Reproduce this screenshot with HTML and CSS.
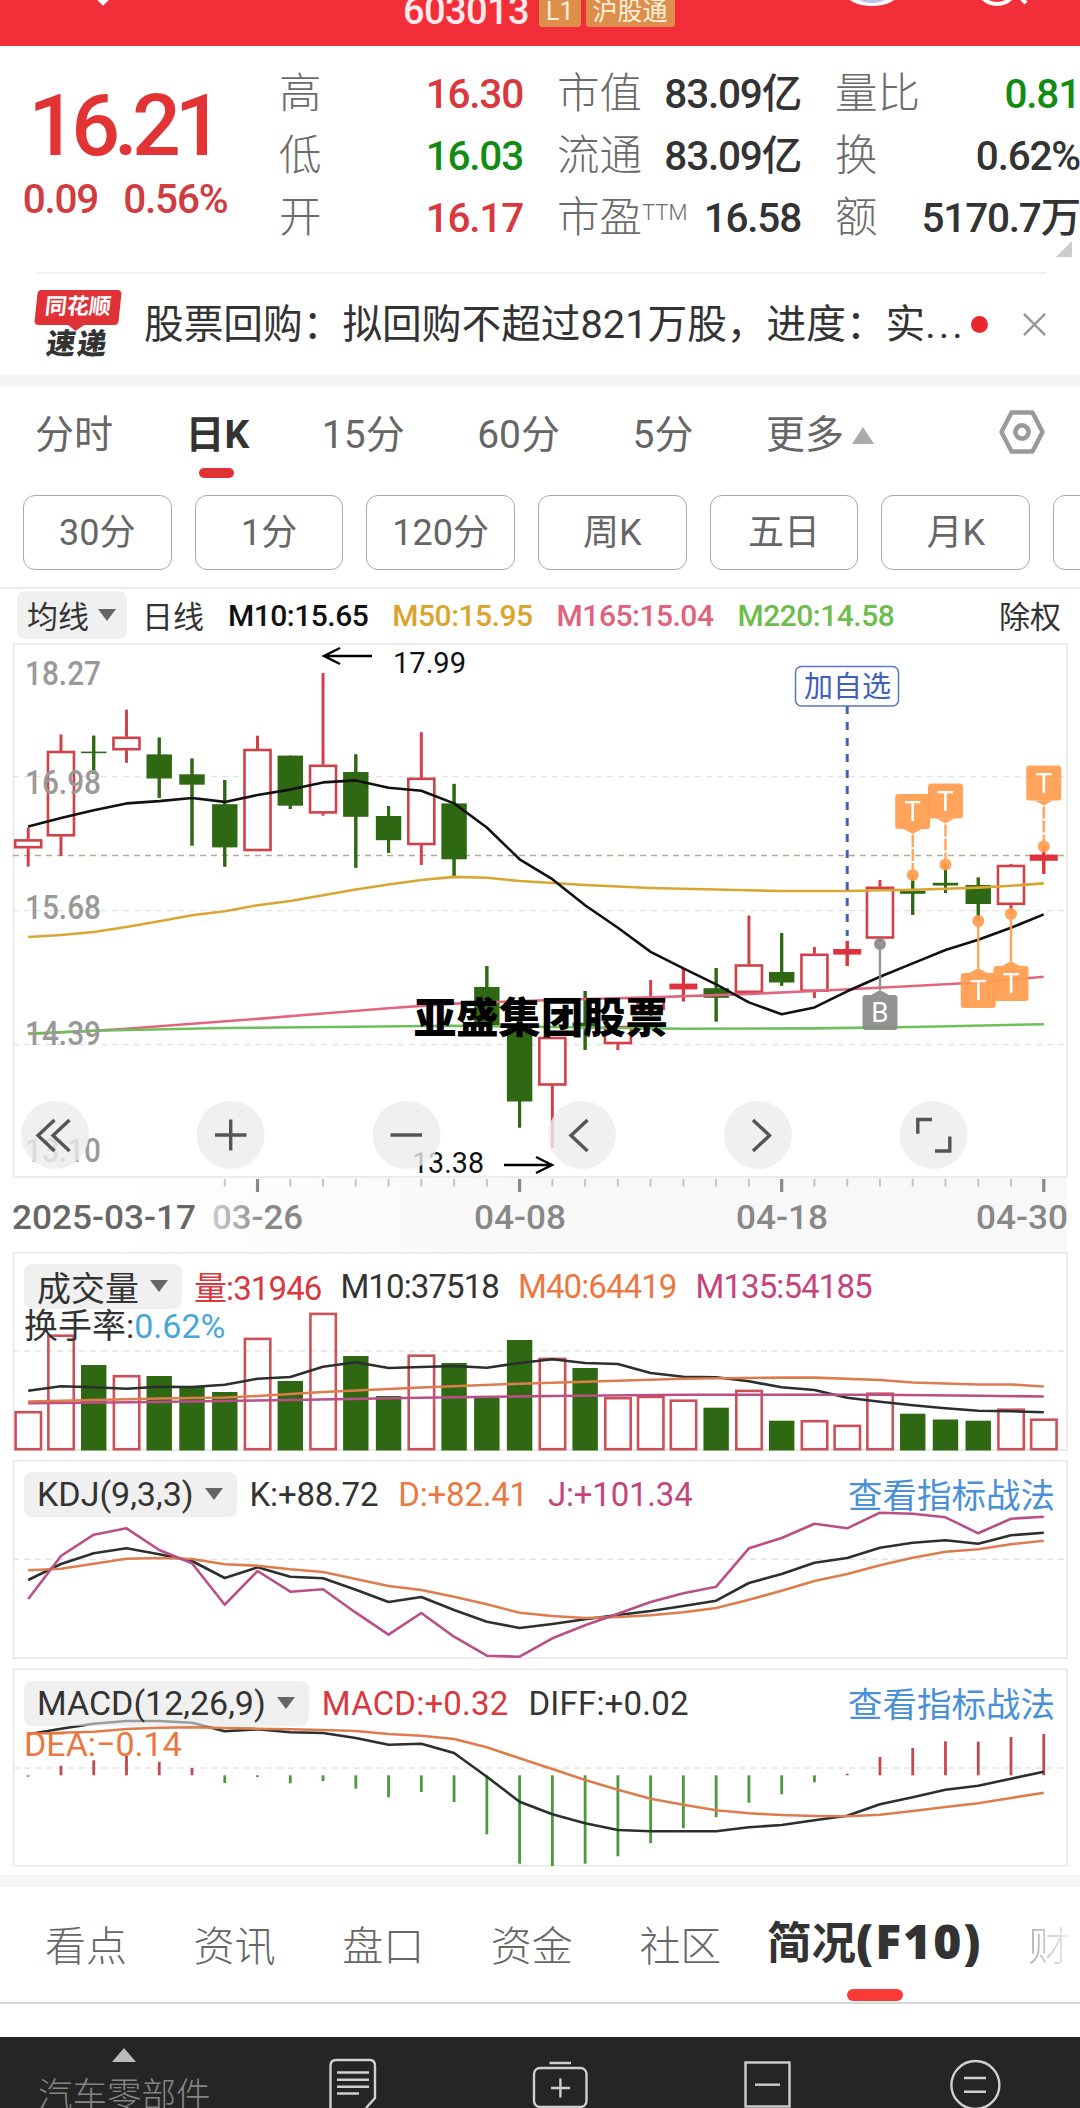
FILE: index.html
```html
<!DOCTYPE html>
<html lang="zh-CN">
<head>
    <meta charset="UTF-8">
    <title>603013</title>
    <link rel="stylesheet" href="styles.css">
</head>
<body>
    <header class="topbar">
        <svg class="topbar-icons" viewBox="0 0 1080 45">
            <path d="M92 -8 L103 3 L114 -8" fill="none" stroke="#fff" stroke-width="4"/>
            <ellipse cx="872" cy="-8" rx="27" ry="14" fill="#fff"/>
            <ellipse cx="872" cy="-8" rx="19" ry="11" fill="#b9c6e6"/>
            <circle cx="997" cy="-16" r="20" fill="none" stroke="#fff" stroke-width="4"/>
            <path d="M1011 -12 L1026 3" stroke="#fff" stroke-width="4"/>
        </svg>
        <span class="code">603013</span>
        <span class="badge">L1</span>
        <span class="badge">沪股通</span>
    </header>

    <section class="quote">
        <div class="price">
            <div class="price-now">16.21</div>
            <div class="price-diff"><span>0.09</span><span>0.56%</span></div>
        </div>
        <div class="stats">
            <span class="label">高</span><span class="value red">16.30</span>
            <span class="label">市值</span><span class="value">83.09亿</span>
            <span class="label">量比</span><span class="value green">0.81</span>
            <span class="label">低</span><span class="value green">16.03</span>
            <span class="label">流通</span><span class="value">83.09亿</span>
            <span class="label">换</span><span class="value">0.62%</span>
            <span class="label">开</span><span class="value red">16.17</span>
            <span class="label">市盈<sup>TTM</sup></span><span class="value">16.58</span>
            <span class="label">额</span><span class="value">5170.7万</span>
        </div>
        <i class="corner"></i>
    </section>

    <section class="news">
        <div class="news-logo">
            <div class="news-logo-top">同花顺</div>
            <div class="news-logo-bottom">速递</div>
        </div>
        <div class="news-text">股票回购：拟回购不超过821万股，进度：实<span class="dots">...</span></div>
        <i class="news-dot"></i>
        <svg class="news-close" viewBox="0 0 24 24"><path d="M1 1 L23 23 M23 1 L1 23" stroke="#999" stroke-width="2.6"/></svg>
    </section>

    <nav class="periods">
        <span>分时</span>
        <span class="active">日K</span>
        <span>15分</span>
        <span>60分</span>
        <span>5分</span>
        <span>更多<i class="up"></i></span>
        <svg class="gear" viewBox="0 0 46 44">
            <path d="M12.5 2.5 H33.5 L43.5 22 L33.5 41.5 H12.5 L2.5 22 Z" fill="none" stroke="#999" stroke-width="4.4" stroke-linejoin="round"/>
            <circle cx="23" cy="22" r="6.6" fill="none" stroke="#999" stroke-width="4.6"/>
        </svg>
    </nav>

    <div class="chips">
        <span>30分</span><span>1分</span><span>120分</span><span>周K</span><span>五日</span><span>月K</span><span></span>
    </div>

    <div class="ma-row">
        <span class="select">均线<i class="down"></i></span>
        <span class="ma-title">日线</span>
        <span class="black">M10:15.65</span>
        <span class="yellow">M50:15.95</span>
        <span class="pink">M165:15.04</span>
        <span class="lime">M220:14.58</span>
        <span class="ma-right">除权</span>
    </div>

    <div class="kline">
        <svg id="kline" viewBox="0 0 1080 612"></svg>
        <div class="watermark">亚盛集团股票</div>
    </div>

    <section class="panel volume">
        <svg id="volume" viewBox="0 0 1080 208"></svg>
        <div class="panel-head">
            <span class="select">成交量<i class="down"></i></span>
            <span class="red">量:31946</span>
            <span>M10:37518</span>
            <span class="orange">M40:64419</span>
            <span class="magenta">M135:54185</span>
        </div>
        <div class="panel-sub">换手率:<span class="blue">0.62%</span></div>
    </section>

    <section class="panel kdj">
        <svg id="kdj" viewBox="0 0 1080 208"></svg>
        <div class="panel-head">
            <span class="select">KDJ(9,3,3)<i class="down"></i></span>
            <span>K:+88.72</span>
            <span class="orange">D:+82.41</span>
            <span class="magenta">J:+101.34</span>
            <span class="link">查看指标战法</span>
        </div>
    </section>

    <section class="panel macd">
        <svg id="macd" viewBox="0 0 1080 207"></svg>
        <div class="panel-head">
            <span class="select">MACD(12,26,9)<i class="down"></i></span>
            <span class="red">MACD:+0.32</span>
            <span>DIFF:+0.02</span>
            <span class="link">查看指标战法</span>
        </div>
        <div class="panel-sub orange">DEA:−0.14</div>
    </section>

    <nav class="tabs">
        <span>看点</span>
        <span>资讯</span>
        <span>盘口</span>
        <span>资金</span>
        <span>社区</span>
        <span class="active">简况<b>(F10)</b></span>
        <span class="faded">财</span>
    </nav>

    <footer class="bottombar">
        <div class="sector"><i class="up"></i>汽车零部件</div>
        <svg class="bottombar-icons" viewBox="220 2037 860 71" fill="none" stroke="#d0d0d0" stroke-width="2.4">
            <path d="M336 2060 H370 Q375 2060 375 2066 V2098 L366 2108 M330.500 2110 V2066 Q330.500 2060 336 2060"/>
            <path d="M337 2072.500 H369 M337 2079.700 H369 M337 2086.700 H369 M337 2093.500 H359"/>
            <rect x="534" y="2068" width="52.500" height="39" rx="6"/>
            <path d="M549.500 2063 H571 M551 2088 H570 M560.400 2078.500 V2097.500"/>
            <rect x="745.500" y="2062.500" width="44" height="44"/>
            <path d="M755 2084.700 H780"/>
            <circle cx="975.400" cy="2085" r="24"/>
            <path d="M964 2078 H986 M964 2091.700 H986"/>
        </svg>
    </footer>

    <script>
        const COUNT = 32;
        const RED = '#d2404a';
        const GREEN = '#2f6813';
        const cx = i => 28.2 + i * 32.76;

        function line(x1, y1, x2, y2, color, width, dash) {
            return `<line x1="${x1}" y1="${y1}" x2="${x2}" y2="${y2}" stroke="${color}" stroke-width="${width}"${dash ? ` stroke-dasharray="${dash}"` : ''}/>`;
        }

        function rect(x, y, w, h, fill, stroke) {
            return `<rect x="${x}" y="${y}" width="${w}" height="${h}" fill="${fill}"${stroke ? ` stroke="${stroke}" stroke-width="2.6"` : ''}/>`;
        }

        function text(value, x, y, size, width, color, weight = 400) {
            return `<text x="${x}" y="${y}" font-size="${size}" font-weight="${weight}" fill="${color}" textLength="${width}" lengthAdjust="spacingAndGlyphs">${value}</text>`;
        }

        // values: one y for each candle, or [index, y] pairs
        function curve(values, color, width = 2.6) {
            const points = values.map((v, i) => Array.isArray(v) ? `${cx(v[0])},${v[1]}` : `${cx(i)},${v}`);
            return `<polyline points="${points.join(' ')}" fill="none" stroke="${color}" stroke-width="${width}" stroke-linejoin="round"/>`;
        }

        function frame(top, bottom) {
            return `<rect x="13.500" y="${top}" width="1053.500" height="${bottom - top}" fill="#fff" stroke="#e8e8e8" stroke-width="1.6"/>`;
        }

        // K line: type (r hollow, R solid red, g green), high, body top, body bottom, low
        const candles = [
            ['r', 187.5, 199.4, 208.2, 226.6], ['r', 94.5, 111, 196.3, 216], ['g', 95.7, 111.6, 113.2, 134],
            ['r', 69.7, 96.8, 110.2, 122.8], ['g', 97.6, 114.4, 138.5, 157.7], ['g', 118.6, 134.3, 144.7, 205.5],
            ['g', 140, 164.2, 207.4, 226.6], ['r', 95.7, 109, 211, 211], ['g', 115.6, 115.6, 165.7, 169],
            ['r', 33, 124.8, 173.4, 175.7], ['g', 114.4, 132, 176.8, 227.7], ['g', 166, 176, 200.2, 212.8],
            ['r', 92.2, 137.8, 205, 225], ['g', 143.9, 163.4, 219.3, 236], ['g', 326, 347, 385, 387],
            ['g', 388, 388, 461.5, 487.5], ['r', 397, 397, 445.5, 508], ['g', 351, 382.7, 386.5, 409.8],
            ['r', 386, 386, 404, 410], ['r', 340, 358, 370, 376], ['R', 328, 343.6, 349.4, 361.3],
            ['g', 328, 348.2, 357.8, 381.5], ['r', 275.5, 324.5, 352.8, 352.8], ['g', 293, 332, 342.5, 345.6],
            ['r', 307, 313.8, 351.7, 358], ['R', 301, 309, 314.6, 326], ['r', 240, 246.8, 298.5, 302],
            ['g', 236, 251, 253.8, 274.8], ['g', 224.6, 242.8, 245.5, 253], ['g', 237.6, 245, 264, 281],
            ['r', 223.9, 225, 264.8, 273.6], ['R', 206.6, 214.6, 220.8, 233.8]
        ];

        function marker(i, letter, top, dotY, color, below) {
            const x = cx(i);
            const tip = below ? top - 5 : top + 40;
            const edge = below ? top : top + 35;
            let s = line(x, dotY, x, tip, color, 2.4, below ? '' : '12 2');
            s += `<circle cx="${x}" cy="${dotY}" r="6" fill="${color}"/>`;
            s += `<rect x="${x - 17.5}" y="${top}" width="35" height="35" rx="3" fill="${color}"/>`;
            s += `<path d="M${x - 9} ${edge} L${x} ${tip} L${x + 9} ${edge} Z" fill="${color}"/>`;
            s += `<text x="${x}" y="${top + 27}" font-size="28" fill="#fff" text-anchor="middle">${letter}</text>`;
            return `<g opacity="0.92">${s}</g>`;
        }

        function drawKline() {
            let s = rect(0, 537, 1067, 75, 'url(#axis)') + frame(4, 537);
            s = `<defs>
                <linearGradient id="axis"><stop offset="0.1" stop-color="#fff"/><stop offset="0.5" stop-color="#f8f8f8"/></linearGradient>
                <linearGradient id="fade"><stop offset="0" stop-color="#ccc"/><stop offset="0.6" stop-color="#888"/></linearGradient>
            </defs>` + s;
            [136.6, 270.6, 404.5].forEach(y => { s += line(13, y, 1067, y, '#e3e3e3', 1.4, '6 5'); });
            s += line(13, 215.5, 1067, 215.5, '#b5ab8b', 1.6, '6 5');

            candles.forEach(([type, high, top, bottom, low], i) => {
                const x = cx(i);
                const color = type === 'g' ? GREEN : type === 'R' ? '#e0323a' : RED;
                s += line(x, high, x, top, color, 3) + line(x, bottom, x, low, color, 3);
                if (type === 'r') {
                    s += rect(x - 13, top + 1, 26, Math.max(bottom - top - 2, 2), '#fff', color);
                } else {
                    s += rect(x - (type === 'R' ? 14 : 12.7), top, type === 'R' ? 28 : 25.4, bottom - top, color);
                    s += line(x, high, x, low, color, 3);
                }
            });

            s += curve([297, 295, 292, 287, 281.3, 275.2, 271.3, 265.2, 261, 255.3, 249.5, 244.5, 240, 236.9, 237.7, 241, 243, 245, 246.5, 248, 248.8, 249.5, 250.3, 251, 251, 251, 250.3, 249.9, 248.8, 247.6, 245.7, 243.4], '#d8a732');
            s += curve([[0, 394], [2, 390.7], [3, 388.8], [5, 383.8], [7, 378.9], [9, 373.5], [11, 368.2], [13, 363.6], [16, 360], [19, 357.4], [22, 354], [24, 351], [27, 346], [29, 342.5], [31, 336.8]], '#e0667f');
            s += curve([[0, 393.5], [2, 390.7], [6, 388], [13, 385.7], [16, 387], [20, 388.8], [24, 388.4], [27, 387], [31, 384.2]], '#6cc05a');
            s += curve([186.4, 178, 170.3, 163.4, 161.1, 158, 161.9, 155, 149.6, 142.4, 140.4, 147.7, 150.8, 163.4, 187.5, 219.3, 239.2, 265.2, 287.8, 311.9, 328.4, 344.4, 362.4, 374.3, 367.4, 351.3, 336.8, 323.4, 310, 299.7, 287.8, 274.4], '#111');

            [['18.27', 45.2], ['16.98', 153.8], ['15.68', 278.6], ['14.39', 405], ['13.10', 522]].forEach(([label, y]) => {
                s += text(label, 25, y, 33, 76, '#999', 500);
            });

            // highest and lowest price
            s += `<path d="M372 16 H324 M340 8 L324 16 L340 24" fill="none" stroke="#000" stroke-width="2.4"/>`;
            s += text('17.99', 393, 33, 30, 73, '#111');
            s += `<path d="M504 525 H552 M536 517 L552 525 L536 533" fill="none" stroke="#000" stroke-width="2.4"/>`;
            s += text('13.38', 412, 533, 30, 72, '#111');

            // favourite mark and trade marks
            s += line(847.2, 66, 847.2, 296, '#3f62b8', 3, '8 8');
            s += `<rect x="795.500" y="26.500" width="103" height="39.500" rx="6" fill="#fff" stroke="#5b77c4" stroke-width="1.5"/>`;
            s += text('加自选', 804, 57, 29, 87, '#4060bb');
            s += marker(27, 'T', 154, 235, '#ff9d4d') + marker(28, 'T', 143.5, 224.6, '#ff9d4d') + marker(31, 'T', 125.5, 206.6, '#ff9d4d');
            s += marker(29, 'T', 333, 281, '#ff9d4d', true) + marker(30, 'T', 326, 274, '#ff9d4d', true);
            s += marker(26, 'B', 355, 304, '#8a8a8a', true);

            // round buttons
            [55, 230.7, 406.7, 582, 758, 933.6].forEach(x => {
                s += `<circle cx="${x}" cy="495" r="34" fill="#ececec" fill-opacity="0.8"/>`;
            });
            s += `<path d="M54.500 480 L38 495.500 L54.500 511 M69.500 480 L53 495.500 L69.500 511
                M215 495 H246.500 M230.700 479.500 V510.500 M390.500 495 H422
                M587.500 480 L571 495.500 L587.500 511 M753 480 L769.500 495.500 L753 511
                M917.800 493.700 V479.500 H932 M935 511 H949.800 V496.500" fill="none" stroke="#555" stroke-width="3.400"/>`;

            for (let i = 6; i < COUNT; i++) {
                const major = i % 8 === 7;
                s += line(cx(i), 539, cx(i), major ? 552 : 546.5, major ? '#888' : '#c4c4c4', major ? 3.2 : 2);
            }
            s += text('2025-03-17', 12, 589, 33, 184, '#666', 500);
            s += text('03-26', 212, 589, 33, 91, 'url(#fade)', 500);
            s += text('04-08', 474, 589, 33, 92, '#888', 500);
            s += text('04-18', 736, 589, 33, 92, '#888', 500);
            s += text('04-30', 976, 589, 33, 92, '#888', 500);
            document.getElementById('kline').innerHTML = s;
        }

        function drawVolume() {
            const tops = [159, 82.5, 113, 123, 124, 134, 140, 85.7, 129, 60.7, 104, 144, 102.5, 111, 146, 88, 105.7, 116, 145, 143.7, 147.5, 155.7, 137.7, 168.7, 168, 172.7, 140.5, 161.7, 167.5, 168.7, 156.5, 166.5];
            let s = frame(0.8, 198) + line(13, 99, 1067, 99, '#e3e3e3', 1.4, '6 5');
            tops.forEach((top, i) => {
                if (candles[i][0] === 'g') {
                    s += rect(cx(i) - 12.7, top, 25.4, 198.5 - top, GREEN);
                } else {
                    s += rect(cx(i) - 12.6, top + 1.2, 25.4, 196 - top, 'none', '#cc5058');
                }
            });
            s += curve([138.7, 134.3, 135.3, 136.7, 134.7, 135, 132.7, 126.7, 125, 114.7, 110.3, 116, 115, 114, 115.7, 111, 107.3, 111, 112, 121, 124.7, 125.3, 129.3, 135.3, 138, 145.7, 149.7, 153.3, 156.3, 158.7, 159.3, 160.3], '#2b2f2e');
            s += curve([[0, 151.3], [4, 150], [8, 148], [12, 145.7], [16, 144], [20, 142.7], [26, 142.7], [29, 143.7], [31, 144.5]], '#b94f86');
            s += curve([[0, 149.5], [4, 146.5], [6, 145.5], [7, 144], [9, 140], [12, 135.5], [15, 131.7], [18, 128.7], [20, 126.8], [23, 125.6], [24, 125.6], [26, 128], [27, 130.5], [29, 132.5], [30, 132.5], [31, 134.5]], '#dd7c4c');
            document.getElementById('volume').innerHTML = s;
        }

        function drawKdj() {
            let s = frame(0.8, 198) + line(13, 99.3, 1067, 99.3, '#e3e3e3', 1.4, '6 5');
            s += curve([120, 104, 93.3, 88.3, 94.3, 101, 118, 107.3, 116.7, 118.3, 129.7, 142, 137, 150, 161.7, 168, 164, 159.3, 155, 151, 146, 140.7, 123, 114, 102.7, 98, 87.7, 82.7, 80.3, 83.7, 75.3, 72.7], '#2b2f2e');
            s += curve([110.3, 108.7, 103.7, 98.7, 98, 99, 104.3, 105.7, 109.3, 112, 119, 126, 130, 136.7, 144.3, 152.7, 156, 158, 157, 155.3, 152.3, 148, 139.7, 130.7, 121, 114, 105.3, 97.8, 91.7, 89.3, 84.3, 80.7], '#dd7c4c');
            s += curve([139, 96, 74.7, 68.3, 90, 103.3, 144.7, 111, 131.7, 129.3, 152.7, 174.7, 153, 176.7, 195.7, 196.7, 178.3, 165.3, 153.7, 142, 133.3, 126.7, 88.3, 78, 63.7, 68.3, 52.7, 53.7, 57.3, 73.3, 58.7, 56.7], '#b94f86');
            document.getElementById('kdj').innerHTML = s;
        }

        function drawMacd() {
            const ends = [108.7, 97.7, 92.3, 88, 94, 100, 115, 109, 115.3, 113, 120.7, 129.3, 124, 134, 166.3, 195.7, 198, 195.7, 188.3, 175, 160.3, 149.3, 134.7, 126.3, 114.3, 105.7, 89, 80, 73.3, 73.7, 69, 66];
            let s = frame(1.3, 197.7) + line(13, 100, 1067, 100, '#e3e3e3', 1.4, '6 5');
            ends.forEach((y, i) => {
                s += line(cx(i), 107.3, cx(i), y, y > 107.3 ? '#4a9a3d' : '#c4484f', 2.8);
            });
            s += curve([66.3, 60.7, 55.7, 53, 53, 54.7, 63.3, 61.3, 64.3, 65, 70, 76.7, 75.7, 85, 108.7, 133.7, 146.3, 155.3, 162, 163.3, 163.3, 163.3, 159.3, 157, 152.3, 147.7, 136.3, 129.3, 121.7, 117.7, 110.7, 103.7], '#2b2f2e');
            s += curve([66, 64.7, 63.7, 61, 59.7, 59.3, 60, 60.7, 61.3, 62, 63, 66, 67.7, 71, 79.3, 90.3, 101, 112, 121.7, 130.7, 136.7, 142.3, 145.3, 147, 148, 148.3, 146.7, 143, 139, 135.3, 130, 124.7], '#dd7c4c');
            document.getElementById('macd').innerHTML = s;
        }

        drawKline();
        drawVolume();
        drawKdj();
        drawMacd();
    </script>
</body>
</html>
```

FILE: styles.css
```css
* {
    box-sizing: border-box;
}

body {
    margin: 0;
    width: 1080px;
    height: 2108px;
    overflow: hidden;
    background-color: #fff;
    color: #333;
    font-family: Roboto, "Noto Sans CJK SC", sans-serif;
    white-space: nowrap;
}

svg {
    display: block;
}

i {
    display: inline-block;
    flex-shrink: 0;
}

.red { color: #d8383e; }
.green { color: #128c12; }
.black { color: #111; }
.yellow { color: #dba42c; }
.pink { color: #e0627b; }
.lime { color: #6cbd4c; }
.orange { color: #ea7840; }
.magenta { color: #c4457c; }
.blue { color: #48a6d8; }

.up {
    border: 11px solid transparent;
    border-top: none;
    border-bottom: 17px solid #aaa;
}

.down {
    border: 9px solid transparent;
    border-bottom: none;
    border-top: 12px solid #666;
}

/* top bar */
.topbar {
    position: relative;
    display: flex;
    align-items: flex-start;
    height: 46px;
    padding-left: 403px;
    background-color: #f22e39;
}

.topbar-icons {
    position: absolute;
    left: 0;
    top: 0;
    width: 1080px;
    height: 45px;
}

.code {
    height: 40px;
    margin: -9px 10px 0 0;
    color: #ffe9ea;
    font-size: 38px;
    font-weight: 500;
    line-height: 40px;
    letter-spacing: -0.6px;
}

.badge {
    height: 35px;
    margin: -8px 5px 0 0;
    padding: 0 7px;
    border-radius: 3px;
    background-color: #dd8e4a;
    color: #fff1dc;
    font-size: 25px;
    line-height: 40px;
}

/* quote */
.quote {
    position: relative;
    display: flex;
    height: 226px;
}

.price {
    width: 246px;
    padding-top: 35px;
    text-align: center;
    color: #e23434;
}

.price-now {
    height: 90px;
    font-size: 86px;
    font-weight: 500;
    line-height: 90px;
    letter-spacing: -6px;
}

.price-diff {
    display: flex;
    justify-content: center;
    gap: 25px;
    height: 50px;
    margin-top: 3px;
    padding-left: 4px;
    color: #d03c40;
    font-size: 40.5px;
    font-weight: 500;
    line-height: 50px;
    letter-spacing: -1.2px;
}

.stats {
    display: grid;
    grid-template-columns: 80px 164px 119px 159px 109px 170px;
    grid-template-rows: repeat(3, 62px);
    padding: 17px 0 0 33px;
    line-height: 62px;
}

.label {
    color: #6b6b6b;
    font-size: 42.5px;
    font-weight: 300;
}

.label:nth-child(6n + 3), .label:nth-child(6n + 5) {
    margin-left: 34px;
}

.label sup {
    display: inline-block;
    font-size: 22px;
    line-height: 20px;
    vertical-align: 12px;
}

.value {
    font-size: 40.5px;
    font-weight: 500;
    text-align: right;
    letter-spacing: -1.2px;
}

.corner {
    position: absolute;
    right: 8px;
    bottom: 15px;
    border: 8px solid #ccc;
    border-top-color: transparent;
    border-left-color: transparent;
}

/* news */
.news {
    display: flex;
    align-items: center;
    height: 103px;
    margin-left: 36px;
    border-top: 2px solid #f1f1f1;
    width: 1010px;
}

.news-logo {
    width: 84px;
    margin: 0 24px 0 0;
    text-align: center;
}

.news-logo-top {
    position: relative;
    height: 35px;
    border-radius: 4px;
    background-color: #e03236;
    color: #fff;
    font-size: 22px;
    font-weight: 700;
    line-height: 34px;
    transform: skewX(-6deg);
}

.news-logo-top::after {
    content: "";
    position: absolute;
    left: 34px;
    top: 35px;
    border: 8px solid transparent;
    border-top: 6px solid #e03236;
    border-bottom: none;
}

.news-logo-bottom {
    height: 34px;
    font-size: 29px;
    font-weight: 900;
    line-height: 38px;
    letter-spacing: 2px;
    transform: skewX(-8deg);
}

.news-text {
    width: 824px;
    font-size: 39.7px;
    line-height: 50px;
}

.dots {
    letter-spacing: 3px;
}

.news-dot {
    width: 17px;
    height: 17px;
    margin-left: 3px;
    border-radius: 50%;
    background-color: #e8282c;
}

.news-close {
    width: 23px;
    height: 23px;
    margin-left: auto;
}

/* periods */
.periods {
    display: flex;
    align-items: center;
    gap: 72.5px;
    height: 108px;
    padding: 0 35px 8px 35px;
    border-top: 12px solid #f5f5f5;
    color: #666;
    font-size: 39px;
}

.periods .up {
    margin-left: 8px;
    vertical-align: 4px;
}

.periods .active {
    position: relative;
    color: #333;
    font-weight: 700;
}

.active::after {
    content: "";
    position: absolute;
    left: 50%;
    bottom: -19px;
    width: 35px;
    height: 10px;
    margin-left: -18px;
    border-radius: 5px;
    background-color: #e03232;
}

.gear {
    width: 46px;
    height: 44px;
    margin: 2px 0 0 auto;
}

/* chips */
.chips {
    display: flex;
    gap: 23px;
    height: 106px;
    padding: 12px 0 0 23px;
    border-bottom: 2px solid #ececec;
    overflow: hidden;
}

.chips span {
    flex: 0 0 148.7px;
    height: 75px;
    border: 1.5px solid #aaa;
    border-radius: 12px;
    color: #666;
    font-size: 36px;
    line-height: 74px;
    text-align: center;
}

/* averages */
.ma-row {
    display: flex;
    align-items: center;
    height: 51px;
    padding: 2px 19px 0 17px;
    font-size: 30px;
    font-weight: 500;
    letter-spacing: -0.5px;
}

.select {
    display: flex;
    align-items: center;
    border-radius: 8px;
    background-color: rgba(230, 230, 230, 0.6);
    color: #333;
    font-weight: 400;
}

.ma-row .select, .ma-title, .ma-right {
    margin-top: -2px;
    font-size: 31px;
    font-weight: 400;
    letter-spacing: 0;
}

.ma-row .select {
    width: 110px;
    height: 48px;
    padding-left: 10px;
}

.ma-row .down {
    margin-left: 9px;
}

.ma-title {
    margin: -2px 24px 0 15px;
}

.yellow, .pink, .lime {
    margin-left: 24px;
}

.ma-right {
    margin-left: auto;
}

.kline {
    position: relative;
    height: 612px;
}

.watermark {
    position: absolute;
    left: 414px;
    top: 345px;
    color: #000;
    font-family: "Noto Sans CJK SC", sans-serif;
    font-size: 42.3px;
    font-weight: 900;
    line-height: 60px;
}

/* indicator panels, the head lies over the drawing */
.panel {
    position: relative;
    height: 208px;
    font-size: 33px;
}

.panel.macd {
    height: 207px;
}

.panel svg {
    position: absolute;
    left: 0;
    top: 0;
    width: 1080px;
    height: 100%;
}

.panel-head {
    position: relative;
    display: flex;
    align-items: center;
    gap: 20px;
    height: 44px;
    margin: 0 25px 0 24px;
    top: 12px;
}

.volume .panel-head {
    gap: 19px;
    letter-spacing: -0.9px;
}

.panel-head .select {
    height: 45px;
    padding: 0 14px 0 13px;
    font-size: 34px;
    letter-spacing: 0;
}

.panel-head .select .down {
    margin-left: 11px;
}

.panel-head .select + span {
    margin-left: -7px;
}

.kdj .panel-head {
    letter-spacing: -0.2px;
}

.macd .panel-head {
    top: 13px;
    letter-spacing: 0.2px;
}

.link {
    margin: -3px 0 0 auto;
    color: #4a90d9;
    font-size: 34.5px;
    letter-spacing: 0;
}

.panel-sub {
    position: relative;
    top: 12px;
    margin-left: 24px;
    font-size: 34px;
    line-height: 36px;
}

.macd .panel-sub {
    top: 14px;
}

/* bottom tabs */
.tabs {
    display: flex;
    align-items: center;
    gap: 66.6px;
    height: 129px;
    padding: 0 0 4px 45px;
    border-top: 12px solid #f5f5f5;
    border-bottom: 2px solid #d4d8d6;
    color: #666;
    font-size: 41px;
    font-weight: 300;
}

.tabs .active {
    position: relative;
    margin-left: -21px;
    color: #333;
    font-size: 44.5px;
    font-weight: 700;
    line-height: 66px;
}

.tabs .active b {
    font-family: "Noto Sans", sans-serif;
    font-size: 48px;
    letter-spacing: 2px;
}

.tabs .active::after {
    bottom: -24px;
    width: 56px;
    height: 12px;
    margin-left: -28px;
    border-radius: 6px;
    background-color: #fa3a35;
}

.tabs .faded {
    margin-left: -21px;
    background: linear-gradient(90deg, #aaa, #eee);
    background-clip: text;
    color: transparent;
}

.bottombar {
    display: flex;
    height: 71px;
    margin-top: 33px;
    background-color: #252525;
}

.sector {
    width: 220px;
    padding: 11px 0 0 38px;
    color: #858585;
    font-size: 34.5px;
    font-weight: 300;
    line-height: 68px;
    height: 71px;
    overflow: hidden;
}

.sector .up {
    display: block;
    width: 0;
    margin: 0 0 -1px 74px;
    border-width: 0 12px 14px;
    border-bottom-color: #bbb;
}

.bottombar-icons {
    width: 860px;
    height: 71px;
}
```
